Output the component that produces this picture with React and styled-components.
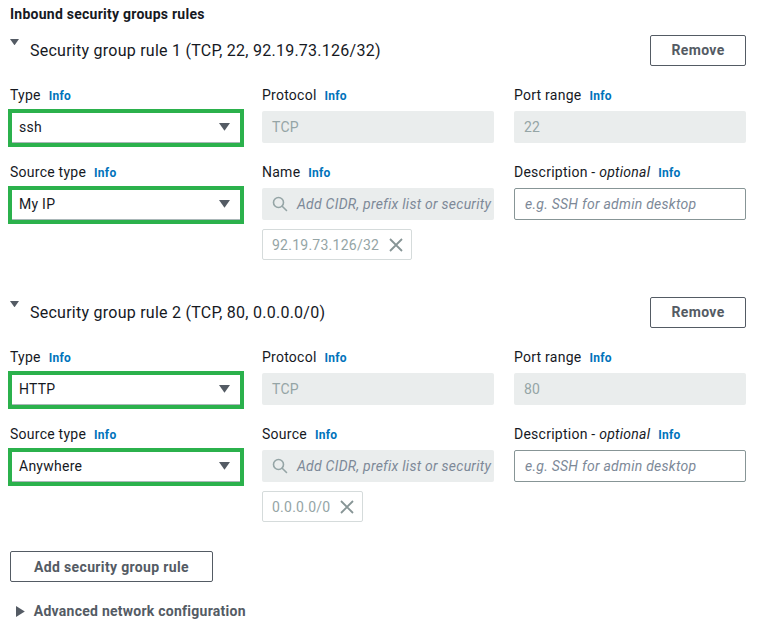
import React from 'react'
import styled, { createGlobalStyle } from 'styled-components'

const GlobalStyle = createGlobalStyle`
  body {
    margin: 0;
    background: #ffffff;
    font-family: Roboto, "Noto Sans", Arial, sans-serif;
    letter-spacing: 0.25px;
    color: #16191f;
  }
`

const rules = [
  {
    title: 'Security group rule 1 (TCP, 22, 92.19.73.126/32)',
    type: 'ssh',
    port: '22',
    sourceType: 'My IP',
    sourceLabel: 'Name',
    token: '92.19.73.126/32',
  },
  {
    title: 'Security group rule 2 (TCP, 80, 0.0.0.0/0)',
    type: 'HTTP',
    port: '80',
    sourceType: 'Anywhere',
    sourceLabel: 'Source',
    token: '0.0.0.0/0',
  },
]

const Caret = ({ dir = 'down', size = 9 }) =>
  dir === 'down' ? (
    <svg width={size} height={size * 0.7} viewBox="0 0 10 7">
      <path d="M0 0 L10 0 L5 7 Z" fill="currentColor" />
    </svg>
  ) : (
    <svg width={size * 0.8} height={size} viewBox="0 0 8 10">
      <path d="M0 0 L8 5 L0 10 Z" fill="currentColor" />
    </svg>
  )

const SearchIcon = () => (
  <svg width="16" height="16" viewBox="0 0 16 16" fill="none" stroke="#95a5a6" strokeWidth="1.6">
    <circle cx="6.5" cy="6.5" r="5" />
    <path d="M10.2 10.2 L14.5 14.5" strokeLinecap="round" />
  </svg>
)

const CloseIcon = () => (
  <svg width="14" height="14" viewBox="0 0 14 14" stroke="#879596" strokeWidth="1.8">
    <path d="M1 1 L13 13 M13 1 L1 13" />
  </svg>
)

const Label = ({ text, optional }) => (
  <FieldLabel>
    {text}
    {optional && <> - <em>optional</em></>}
    <span className="info">Info</span>
  </FieldLabel>
)

const Rule = ({ rule }) => (
  <Section>
    <RuleHeader>
      <RuleTitle>
        <span className="caret"><Caret /></span>
        {rule.title}
      </RuleTitle>
      <Button>Remove</Button>
    </RuleHeader>
    <Grid>
      <Field>
        <Label text="Type" />
        <Select>
          {rule.type}
          <Caret size={11} />
        </Select>
      </Field>
      <Field>
        <Label text="Protocol" />
        <Disabled>TCP</Disabled>
      </Field>
      <Field>
        <Label text="Port range" />
        <Disabled>{rule.port}</Disabled>
      </Field>
      <Field>
        <Label text="Source type" />
        <Select>
          {rule.sourceType}
          <Caret size={11} />
        </Select>
      </Field>
      <Field>
        <Label text={rule.sourceLabel} />
        <Search>
          <SearchIcon />
          <span>Add CIDR, prefix list or security</span>
        </Search>
        <Token>
          {rule.token}
          <CloseIcon />
        </Token>
      </Field>
      <Field>
        <Label text="Description" optional />
        <TextInput>e.g. SSH for admin desktop</TextInput>
      </Field>
    </Grid>
  </Section>
)

const App = () => {
  return (
    <Page>
      <GlobalStyle />
      <Title>Inbound security groups rules</Title>
      {rules.map((r, i) => (
        <Rule key={i} rule={r} />
      ))}
      <AddButton>Add security group rule</AddButton>
      <Advanced>
        <Caret dir="right" size={11} />
        Advanced network configuration
      </Advanced>
    </Page>
  )
}

export default App

const Page = styled.main`
  width: 736px;
  padding: 4px 0 0 10px;
  display: flex;
  flex-direction: column;
`

const Title = styled.h2`
  margin: 0;
  font-size: 14px;
  line-height: 20px;
  font-weight: 700;
  color: #16191f;
`

const Section = styled.section`
  display: flex;
  flex-direction: column;
  margin-top: 10px;
  & + & {
    margin-top: 36px;
  }
`

const RuleHeader = styled.div`
  display: flex;
  justify-content: space-between;
  align-items: center;
  height: 32px;
`

const RuleTitle = styled.div`
  display: flex;
  align-items: center;
  font-size: 16px;
  color: #16191f;
  .caret {
    display: flex;
    align-self: flex-start;
    margin: -2px 11px 0 0;
    color: #545b64;
  }
`

const Button = styled.button`
  width: 96px;
  height: 31px;
  background: #ffffff;
  border: 1px solid #545b64;
  border-radius: 2px;
  font-family: inherit;
  font-size: 14px;
  font-weight: 700;
  letter-spacing: 0.35px;
  color: #545b64;
  padding: 0;
`

const Grid = styled.div`
  display: grid;
  grid-template-columns: repeat(3, 232px);
  column-gap: 20px;
  row-gap: 18px;
  margin-top: 18px;
`

const Field = styled.div`
  display: flex;
  flex-direction: column;
  gap: 4px;
  min-width: 0;
`

const FieldLabel = styled.label`
  font-size: 14px;
  line-height: 22px;
  color: #16191f;
  white-space: nowrap;
  em {
    font-style: italic;
  }
  .info {
    margin-left: 8px;
    font-size: 12px;
    font-weight: 700;
    color: #0073bb;
  }
`

const Select = styled.div`
  height: 38px;
  margin: -2px -2px -4px;
  box-sizing: border-box;
  border: 4px solid #2bb14c;
  box-shadow: inset 0 -1px 0 #aab7b8;
  background: #ffffff;
  display: flex;
  align-items: center;
  justify-content: space-between;
  padding: 0 10px 2px 7px;
  font-size: 14px;
  color: #16191f;
  svg {
    color: #545b64;
  }
`

const Disabled = styled.div`
  height: 32px;
  box-sizing: border-box;
  border-radius: 2px;
  background: #eaeded;
  display: flex;
  align-items: center;
  padding: 0 10px;
  font-size: 14px;
  color: #95a5a6;
`

const Search = styled(Disabled)`
  gap: 9px;
  overflow: hidden;
  white-space: nowrap;
  span {
    font-style: italic;
    color: #7d8998;
  }
  svg {
    flex-shrink: 0;
  }
`

const TextInput = styled.div`
  height: 32px;
  box-sizing: border-box;
  border: 1px solid #879596;
  border-radius: 2px;
  display: flex;
  align-items: center;
  padding: 0 10px;
  font-size: 14px;
  font-style: italic;
  color: #7d8998;
`

const Token = styled.div`
  align-self: flex-start;
  margin-top: 5px;
  height: 31px;
  box-sizing: border-box;
  border: 1px solid #d5dbdb;
  border-radius: 2px;
  display: flex;
  align-items: center;
  gap: 10px;
  padding: 0 8px 0 9px;
  font-size: 14px;
  color: #95a5a6;
`

const AddButton = styled(Button)`
  align-self: flex-start;
  width: 203px;
  margin-top: 29px;
`

const Advanced = styled.div`
  display: flex;
  align-items: center;
  gap: 9px;
  margin-top: 21px;
  padding-left: 6px;
  font-size: 14px;
  font-weight: 700;
  color: #545b64;
`
